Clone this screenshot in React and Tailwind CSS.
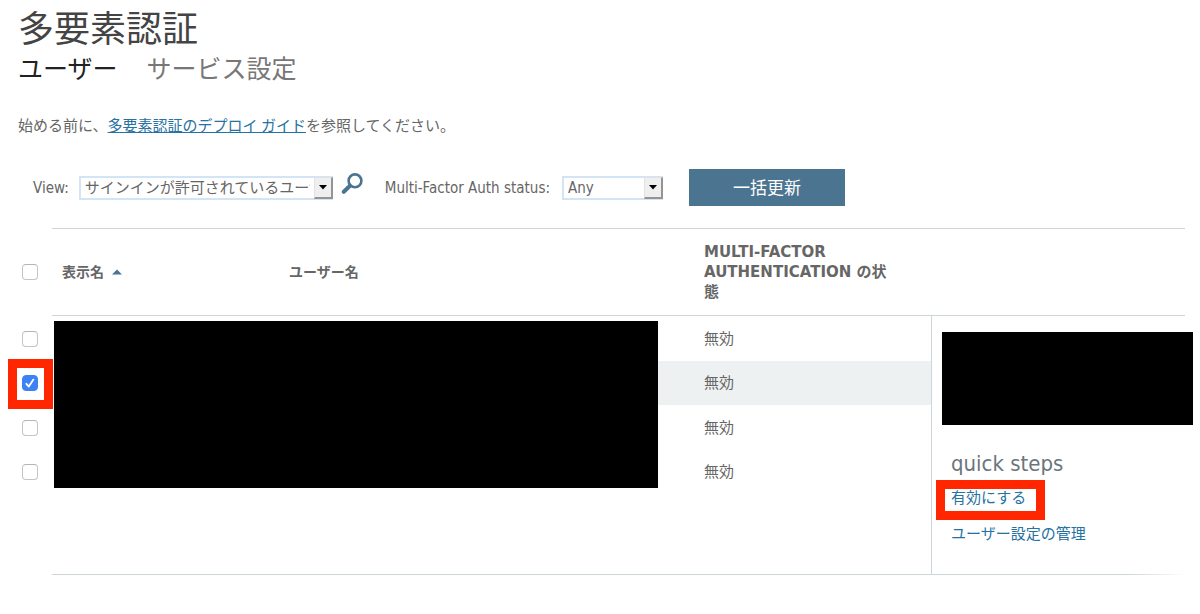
import React, { useState } from "react";

const users = [
  { id: 1, status: "無効" },
  { id: 2, status: "無効" },
  { id: 3, status: "無効" },
  { id: 4, status: "無効" },
];

const Checkbox = ({ label, checked, onChange }) => (
  <span className="relative block w-4 h-4">
    <input
      type="checkbox"
      aria-label={label}
      checked={checked}
      onChange={onChange}
      className="peer block appearance-none w-4 h-4 rounded border border-[#c4c4c4] border-t-[#b4b4b4] bg-white checked:border-[#3b82f7] checked:bg-[#3b82f7]"
    />
    <svg
      viewBox="0 0 16 16"
      className="absolute inset-0 w-4 h-4 pointer-events-none hidden peer-checked:block"
      fill="none"
      stroke="white"
      strokeWidth="1.8"
      strokeLinecap="round"
      strokeLinejoin="round"
    >
      <path d="M4.4 8.8 6.8 11.6 11.4 4.6" />
    </svg>
  </span>
);

const Select = ({ id, options, className }) => (
  <span className={`relative block h-6 ${className}`}>
    <select
      id={id}
      className="block appearance-none w-full h-6 border-2 border-[#d3e5f5] bg-white pl-1 pr-[21px] leading-5 text-[#666] rounded-none whitespace-nowrap overflow-hidden"
    >
      {options.map((option) => (
        <option key={option}>{option}</option>
      ))}
    </select>
    <span className="absolute right-0 top-px flex items-center justify-center w-[19px] h-[22px] pointer-events-none bg-[#efefef] border border-r-2 border-b-2 border-[#e2e2e2] border-r-[#949494] border-b-[#949494]">
      <svg viewBox="0 0 8 5" className="w-2 h-[5px]">
        <path d="M0 0h8L4 4.6z" fill="#000" />
      </svg>
    </span>
  </span>
);

const Filters = () => (
  <div className="flex items-center mt-[34px] pl-[33px]">
    <label htmlFor="view">View:</label>
    <Select
      id="view"
      className="w-[254px] ml-2.5"
      options={["サインインが許可されているユーザー", "サインインが禁止されているユーザー"]}
    />
    <button type="button" aria-label="検索" className="ml-2 mb-2">
      <svg viewBox="0 0 22 22" className="w-[22px] h-[22px]" fill="none" stroke="#4b7490">
        <circle cx="14" cy="7.8" r="6.4" strokeWidth="2.6" />
        <path d="M9 12.8 2.8 18.8" strokeWidth="4" strokeLinecap="round" />
      </svg>
    </button>
    <label htmlFor="status" className="ml-[22px]">
      Multi-Factor Auth status:
    </label>
    <Select id="status" className="w-[101px] ml-3" options={["Any", "Enabled", "Enforced"]} />
    <button type="button" className="ml-[26px] w-[156px] h-[37px] bg-[#4b7490] text-white text-[17px]">
      一括更新
    </button>
  </div>
);

const QuickSteps = () => (
  <div className="pt-4 pl-[10px]">
    <div className="-mr-2 h-[93px] bg-black" />
    <div className="pl-[9px]">
      <h2 className="mt-[23px] text-[22px] leading-8 text-[#6c757c]">quick steps</h2>
      <div className="relative w-fit mt-2">
        <a href="#enable" className="block leading-5 text-[#2672a2]">
          有効にする
        </a>
        <span className="absolute -left-[15px] -right-[19px] -top-2 -bottom-3 border-[9px] border-[#ff2600] pointer-events-none" />
      </div>
      <a href="#settings" className="block w-fit mt-4 leading-5 text-[#2672a2]">
        ユーザー設定の管理
      </a>
    </div>
  </div>
);

const App = () => {
  const [selected, setSelected] = useState([2]);

  const toggle = (id) => {
    setSelected(selected.includes(id) ? selected.filter((s) => s !== id) : [...selected, id]);
  };

  const toggleAll = () => {
    setSelected(selected.length === users.length ? [] : users.map((u) => u.id));
  };

  return (
    <main className="pt-0.5 pb-8 bg-white overflow-hidden text-[15px] leading-5 text-[#666] font-['DejaVu_Sans_Condensed','Noto_Sans_CJK_JP',sans-serif]">
      <header className="pl-[18px] font-['Noto_Sans_CJK_JP',sans-serif]">
        <h1 className="text-[36px] leading-[49px] text-[#444]">多要素認証</h1>
        <nav className="flex gap-[29px] text-[25px] leading-8">
          <a href="#users" className="text-[#222]">
            ユーザー
          </a>
          <a href="#service" className="text-[#777]">
            サービス設定
          </a>
        </nav>
        <p className="mt-8">
          始める前に、
          <a href="#guide" className="text-[#2672a2] underline">
            多要素認証のデプロイ ガイド
          </a>
          を参照してください。
        </p>
      </header>

      <Filters />

      <div className="mt-[22px] pl-2 pr-[15px]">
        <table className="w-full table-fixed border-separate border-spacing-0 text-left">
          <colgroup>
            <col className="w-11" />
            <col className="w-[227px]" />
            <col />
            <col className="w-[273px]" />
            <col className="w-[254px]" />
          </colgroup>
          <thead className="text-[14px] leading-5 font-['DejaVu_Sans','Noto_Sans_CJK_JP',sans-serif]">
            <tr className="h-[88px]">
              <th className="pl-3.5">
                <Checkbox
                  label="すべて選択"
                  checked={selected.length === users.length}
                  onChange={toggleAll}
                />
              </th>
              <th className="pl-2.5 border-y border-[#ccd5da]">
                <span className="flex items-center gap-2">
                  表示名
                  <svg viewBox="0 0 10 6" className="w-2.5 h-1.5">
                    <path d="M0 5.5 5 0.5l5 5z" fill="#4b7490" />
                  </svg>
                </span>
              </th>
              <th className="pl-2.5 border-y border-[#ccd5da]">ユーザー名</th>
              <th className="pl-[46px] pr-10 text-[15px] leading-5 border-y border-[#ccd5da]">
                MULTI-FACTOR AUTHENTICATION の状態
              </th>
              <td className="border-y border-[#ccd5da]" />
            </tr>
          </thead>
          <tbody>
            {users.map((user, idx) => (
              <tr key={user.id} className={idx % 2 ? "h-11" : "h-[45px]"}>
                <td className="pl-3.5">
                  <div className="relative w-4">
                    <Checkbox
                      label={`ユーザー ${user.id}`}
                      checked={selected.includes(user.id)}
                      onChange={() => toggle(user.id)}
                    />
                    {user.id === 2 && (
                      <span className="absolute -left-3.5 -right-[15px] -top-4 -bottom-[18px] border-[9px] border-[#ff2600] pointer-events-none" />
                    )}
                  </div>
                </td>
                {idx === 0 && (
                  <td colSpan={2} rowSpan={4} className="align-top pt-[5px] pl-0.5">
                    <div className="h-[167px] bg-black" />
                  </td>
                )}
                <td className={`pl-[46px] ${selected.includes(user.id) ? "bg-[#edf1f1]" : ""}`}>
                  {user.status}
                </td>
                {idx === 0 && (
                  <td rowSpan={5} className="align-top border-l border-[#ccd5da]">
                    <QuickSteps />
                  </td>
                )}
              </tr>
            ))}
            <tr className="h-20">
              <td colSpan={4} />
            </tr>
          </tbody>
        </table>
        <div className="ml-11 h-px bg-linear-to-r from-[#ccd5da] from-95% to-white" />
      </div>
    </main>
  );
};

export default App;
